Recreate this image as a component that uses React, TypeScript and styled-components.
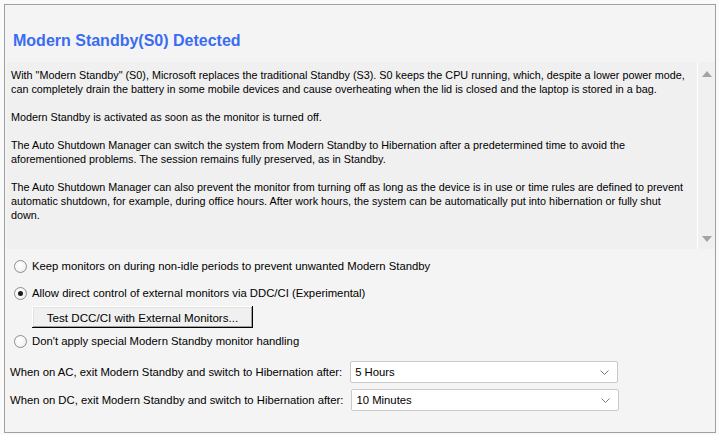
import React from 'react';
import styled, { createGlobalStyle } from 'styled-components';

const GlobalStyle = createGlobalStyle`
  html, body {
    margin: 0;
    padding: 0;
    background: #fafafa;
  }
  body {
    font-family: "Liberation Sans", Arial, sans-serif;
    font-size: 11.3px;
    color: #000;
  }
`;

// Outer dialog frame
const Frame = styled.div`
  box-sizing: border-box;
  margin: 4px;
  width: 712px;
  height: 429px;
  border: 1px solid #a0a0a0;
  background: #f4f4f4;
  display: flex;
  flex-direction: column;
`;

const Title = styled.h1`
  margin: 26px 0 0 8px;
  font-size: 16px;
  line-height: 19px;
  font-weight: bold;
  color: #3a6cf2;
`;

// Read-only description box with a scrollbar
const DescBox = styled.div`
  margin: 12px 0 0 2px;
  height: 187px;
  display: flex;
  background: #f0f0f0;
`;

const DescText = styled.div`
  flex: 1;
  padding: 6px 9px 0 4px;
  font-size: 10.8px;
  line-height: 14px;

  p {
    margin: 0 0 14px 0;
  }
`;

const ScrollBar = styled.div`
  width: 17px;
  border-left: 1px solid #ffffff;
  display: flex;
  flex-direction: column;
  justify-content: space-between;
  align-items: center;
  padding: 9px 0 7px;
`;

const Arrow = styled.span<{ down?: boolean }>`
  width: 0;
  height: 0;
  border-left: 5px solid transparent;
  border-right: 5px solid transparent;
  ${(p) => (p.down ? 'border-top: 6px solid #a3a3a3;' : 'border-bottom: 6px solid #a3a3a3;')}
`;

const Options = styled.div`
  display: flex;
  flex-direction: column;
  padding: 9px 0 0 9px;
`;

const RadioRow = styled.label<{ gap: number }>`
  display: flex;
  align-items: center;
  height: 16px;
  margin-top: ${(p) => p.gap}px;
  line-height: 16px;
`;

const RadioDot = styled.span<{ checked?: boolean }>`
  box-sizing: border-box;
  width: 13px;
  height: 13px;
  border-radius: 50%;
  border: 1px solid #8e8f8f;
  background: radial-gradient(circle at 40% 40%, #ffffff 0%, #f4f4f4 60%, #dcdcdc 100%);
  margin-right: 5px;
  display: flex;
  align-items: center;
  justify-content: center;

  &::after {
    content: '';
    width: 5px;
    height: 5px;
    border-radius: 50%;
    background: ${(p) => (p.checked ? '#1a1a1a' : 'transparent')};
  }
`;

const TestButton = styled.button`
  box-sizing: border-box;
  margin: 5px 0 0 18px;
  width: 221px;
  height: 22px;
  background: #f0f0f0;
  border: none;
  box-shadow: inset -1px -1px 0 #000, inset 1px 1px 0 #fff, inset -2px -2px 0 #a0a0a0, inset 2px 2px 0 #e3e3e3;
  font-family: inherit;
  font-size: 11.6px;
  color: #000;
  padding: 0;
`;

const Rules = styled.div`
  display: flex;
  flex-direction: column;
  gap: 6px;
  padding: 12px 0 0 5px;
`;

const RuleRow = styled.div`
  display: flex;
  align-items: center;
  gap: 8px;
`;

const Select = styled.div`
  box-sizing: border-box;
  width: 268px;
  height: 22px;
  border: 1px solid #cacaca;
  border-radius: 2px;
  background: #fff;
  display: flex;
  align-items: center;
  justify-content: space-between;
  padding: 0 8px 0 4px;
`;

const Chevron = () => (
  <svg width="9" height="5" viewBox="0 0 9 5">
    <path d="M0.5 0.5 L4.5 4.5 L8.5 0.5" fill="none" stroke="#7a7a7a" strokeWidth="1" />
  </svg>
);

const App: React.FC = () => {
  return (
    <>
      <GlobalStyle />
      <Frame>
        <Title>Modern Standby(S0) Detected</Title>
        <DescBox>
          <DescText>
            <p>
              With "Modern Standby" (S0), Microsoft replaces the traditional Standby (S3). S0 keeps the CPU running, which, despite a lower power mode, can completely drain the battery in some mobile devices and cause overheating when the lid is closed and the laptop is stored in a bag.
            </p>
            <p>Modern Standby is activated as soon as the monitor is turned off.</p>
            <p>
              The Auto Shutdown Manager can switch the system from Modern Standby to Hibernation after a predetermined time to avoid the aforementioned problems. The session remains fully preserved, as in Standby.
            </p>
            <p>
              The Auto Shutdown Manager can also prevent the monitor from turning off as long as the device is in use or time rules are defined to prevent automatic shutdown, for example, during office hours. After work hours, the system can be automatically put into hibernation or fully shut down.
            </p>
          </DescText>
          <ScrollBar>
            <Arrow />
            <Arrow down />
          </ScrollBar>
        </DescBox>
        <Options>
          <RadioRow gap={0}>
            <RadioDot />
            Keep monitors on during non-idle periods to prevent unwanted Modern Standby
          </RadioRow>
          <RadioRow gap={11}>
            <RadioDot checked />
            Allow direct control of external monitors via DDC/CI (Experimental)
          </RadioRow>
          <TestButton>Test DCC/CI with External Monitors...</TestButton>
          <RadioRow gap={5}>
            <RadioDot />
            Don't apply special Modern Standby monitor handling
          </RadioRow>
        </Options>
        <Rules>
          <RuleRow>
            <span>When on AC, exit Modern Standby and switch to Hibernation after:</span>
            <Select>
              <span>5 Hours</span>
              <Chevron />
            </Select>
          </RuleRow>
          <RuleRow>
            <span>When on DC, exit Modern Standby and switch to Hibernation after:</span>
            <Select>
              <span>10 Minutes</span>
              <Chevron />
            </Select>
          </RuleRow>
        </Rules>
      </Frame>
    </>
  );
};

export default App;
